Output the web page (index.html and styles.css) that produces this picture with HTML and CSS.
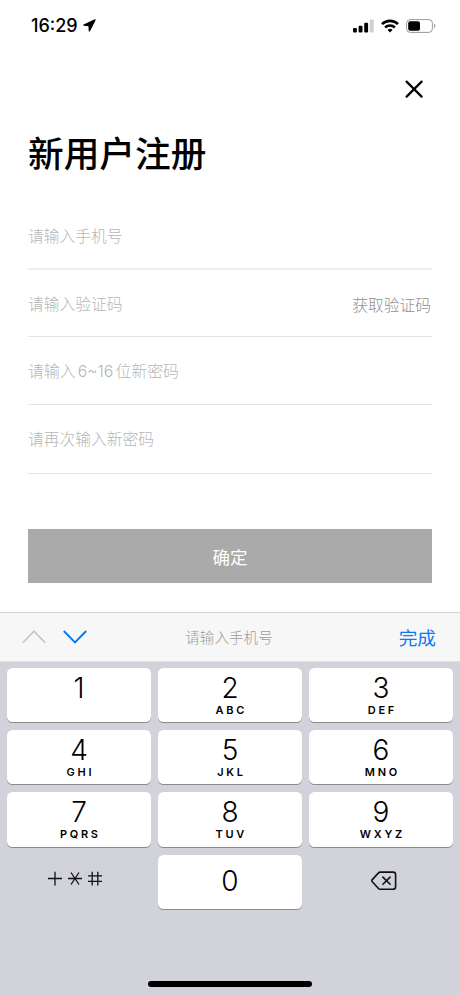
FILE: index.html
```html
<!DOCTYPE html>
<html lang="zh-CN">
<head>
  <meta charset="UTF-8"/>
  <meta name="viewport" content="width=device-width,initial-scale=1.0"/>
  <title>新用户注册</title>
  <link rel="stylesheet" href="styles.css">
</head>
<body>
<div class="status-bar">
  <div class="status-time">
    <span>16:29</span>
    <svg width="13" height="13" viewBox="0 0 13 13"><path d="M12 .9.9 6.1 6 6.5 6.4 11.9Z" fill="#000" stroke="#000" stroke-width="1.3" stroke-linejoin="round"/></svg>
  </div>
  <div class="status-icons">
    <svg width="21" height="14" viewBox="0 0 21 14">
      <rect x="0" y="9" width="3.9" height="4.6" rx="1"/>
      <rect x="5.6" y="6.8" width="3.9" height="6.8" rx="1"/>
      <rect x="11.2" y="3.8" width="3.9" height="9.8" rx="1"/>
      <rect x="16.8" y="0.4" width="3.9" height="13.2" rx="1" fill="#d0d0d0"/>
    </svg>
    <svg width="18" height="14" viewBox="0 0 18 14" fill="none" stroke="#000" stroke-width="2.6">
      <path d="M1 5.1a11.5 11.5 0 0 1 16 0"/>
      <path d="M4.1 8.5a7 7 0 0 1 9.8 0"/>
      <path d="M6.5 10.9a3.6 3.6 0 0 1 5 0L9 13.4Z" fill="#000" stroke="none"/>
    </svg>
    <svg width="30" height="14" viewBox="0 0 30 14">
      <rect x=".6" y=".6" width="25.8" height="12.8" rx="3.6" fill="none" stroke="#999"/>
      <rect x="2.2" y="2.3" width="11.8" height="9.5" rx="2"/>
      <path d="M28 4.8v4.4q1.4-.5 1.4-2.2t-1.4-2.2z" fill="#999"/>
    </svg>
  </div>
</div>

<div class="page">
  <button type="button" class="close-btn" aria-label="关闭">
    <svg width="18" height="18" viewBox="0 0 18 18"><path d="M1.6 1.6 16.6 16.6M16.6 1.6 1.6 16.6" stroke="#000" stroke-width="2.2" stroke-linecap="round"/></svg>
  </button>
  <h1>新用户注册</h1>
  <form id="register-form">
    <div class="field first"><input type="tel" placeholder="请输入手机号"></div>
    <div class="field code">
      <input type="text" placeholder="请输入验证码">
      <button type="button" class="code-btn">获取验证码</button>
    </div>
    <div class="field"><input type="password" class="password" placeholder="请输入6~16位新密码"></div>
    <div class="field last"><input type="password" placeholder="请再次输入新密码"></div>
    <button type="submit" class="submit-btn">确定</button>
  </form>
</div>

<div class="keyboard">
  <div class="toolbar">
    <div class="arrows">
      <svg width="24" height="14" viewBox="0 0 24 14"><path d="M.8 12.8 12 1.2 23.2 12.8" fill="none" stroke="#c4c4c6" stroke-width="1.5"/></svg>
      <svg width="24" height="14" viewBox="0 0 24 14"><path d="M.8 1 12 12.4 23.2 1" fill="none" stroke="#007aff" stroke-width="2"/></svg>
    </div>
    <span class="hint">请输入手机号</span>
    <button type="button" class="done-btn">完成</button>
  </div>
  <div class="keys">
    <div class="key"><b>1</b></div>
    <div class="key"><b>2</b><small>ABC</small></div>
    <div class="key"><b>3</b><small>DEF</small></div>
    <div class="key"><b>4</b><small>GHI</small></div>
    <div class="key"><b>5</b><small>JKL</small></div>
    <div class="key"><b>6</b><small>MNO</small></div>
    <div class="key"><b>7</b><small>PQRS</small></div>
    <div class="key"><b>8</b><small>TUV</small></div>
    <div class="key"><b>9</b><small>WXYZ</small></div>
    <div class="key plain symbols">
      <svg width="54" height="16" viewBox="0 0 54 16" fill="none" stroke="#111" stroke-width="1.3">
        <path d="M0 7.5h14M7 .8v13.6"/>
        <path d="M20 7.5h14M23 1.5l8 12M31 1.5l-8 12"/>
        <path d="M40 4.8h14M40 10.4h14M44.2 .8v13.6M49.8 .8v13.6"/>
      </svg>
    </div>
    <div class="key zero"><b>0</b></div>
    <div class="key plain delete">
      <svg width="26" height="20" viewBox="0 0 26 20" fill="none" stroke="#111" stroke-width="1.6" stroke-linecap="round" stroke-linejoin="round">
        <path d="M9.2 1.1H22a2.6 2.6 0 0 1 2.6 2.6v12a2.6 2.6 0 0 1-2.6 2.6H9.2q-1 0-1.7-.8L1.3 10.8q-.9-1.1 0-2.2L7.5 1.9q.7-.8 1.7-.8z"/>
        <path d="M11.9 6.1l7.2 7.2M19.1 6.1l-7.2 7.2"/>
      </svg>
    </div>
  </div>
  <div class="home-bar"></div>
</div>
</body>
</html>
```
FILE: styles.css
```css
* { box-sizing:border-box; }
body { margin:0; width:460px; height:996px; background:#fff; font-family: Inter,"Noto Sans CJK SC",sans-serif; display:flex; flex-direction:column; overflow:hidden; }
svg { display:block; }
button { border:none; background:none; padding:0; font-family:inherit; cursor:pointer; }

.status-bar { height:50px; padding:1px 24px 0 31px; display:flex; justify-content:space-between; align-items:center; }
.status-time { display:flex; align-items:center; gap:5px; font-size:18px; font-weight:550; line-height:20px; }
.status-icons { display:flex; align-items:center; gap:7px; }

.page { height:562px; padding:0 28px; display:flex; flex-direction:column; }
.close-btn { align-self:flex-end; margin:30px 9px 0 0; }
h1 { margin:30px 0 0; height:52px; line-height:52px; font-size:35.7px; font-weight:500; }
#register-form { margin-top:22px; display:flex; flex-direction:column; }
.field { height:68px; display:flex; align-items:center; border-bottom:1px solid #e5e5e5; }
.field.first { border-bottom:2px solid #eee; }
.field.code { height:67px; }
.field input { flex:1; min-width:0; height:40px; margin-top:2px; border:none; outline:none; padding:0; background:none; font-family:inherit; font-size:15.75px; font-weight:300; text-autospace:normal; }
.field input::placeholder { color:#b6b6b6; opacity:1; }
.field .password { font-size:15.9px; }
.field.last { height:69px; padding-bottom:2px; }
.code-btn { margin:2px 1px 0 0; color:#909090; font-size:15.75px; font-weight:300; }
.submit-btn { margin-top:55px; height:54px; padding-top:1px; background:#aaa; color:#fff; font-size:17.5px; font-weight:400; }

.keyboard { flex:1; background:#d1d2da; display:flex; flex-direction:column; }
.toolbar { height:50px; background:#f7f7f8; border-top:1px solid #d2d2d4; border-bottom:1px solid #e2e3e6; padding:0 24px 0 22px; display:grid; grid-template-columns:1fr auto 1fr; align-items:center; }
.arrows { display:flex; gap:17px; }
.hint { color:#9c9c9c; font-size:14.6px; font-weight:300; margin-bottom:2px; }
.done-btn { justify-self:end; color:#087bf5; font-size:18.7px; font-weight:400; margin-bottom:2px; }
.keys { padding:6px 7px 0; display:grid; grid-template-columns:repeat(3,1fr); grid-auto-rows:54.2px; gap:8px 7px; }
.key { background:#fff; border-radius:5.5px; box-shadow:0 1px 0.5px #8b8c90; display:flex; flex-direction:column; align-items:center; }
.key b { font-size:28px; font-weight:350; line-height:34px; padding-top:3px; }
.key small { font-size:11px; font-weight:600; line-height:14px; margin-top:-2px; letter-spacing:2.7px; margin-right:-2.7px; }
.key.plain { background:none; box-shadow:none; }
.key.zero b { padding-top:9px; }
.symbols svg { margin:16px 8px 0 0; }
.delete svg { margin:16px 0 0 6px; }
.home-bar { width:164px; height:6px; border-radius:3px; background:#000; margin:auto auto 9px; }
```
